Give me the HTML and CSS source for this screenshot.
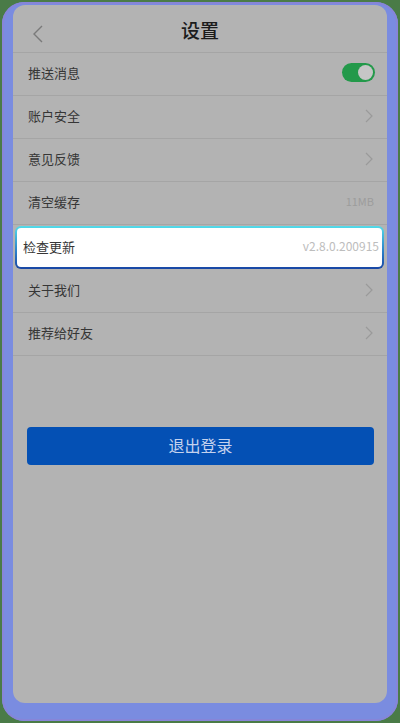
FILE: index.html
```html
<!DOCTYPE html>
<html lang="zh">
<head>
<meta charset="utf-8">
<link rel="stylesheet" href="styles.css">
</head>
<body>
<div class="frame">
  <div class="screen">
    <header class="header">
      <svg class="back" width="12" height="18" viewBox="0 0 12 18"><path d="M10 1 L2 9 L10 17" fill="none" stroke="#7a7a7a" stroke-width="1.4"/></svg>
      <h1 class="title">设置</h1>
    </header>
    <div class="row">
      <span class="label">推送消息</span>
      <span class="toggle"><span class="knob"></span></span>
    </div>
    <div class="row">
      <span class="label">账户安全</span>
      <svg class="chev" width="8" height="14" viewBox="0 0 8 14"><path d="M1 1 L7 7 L1 13" fill="none" stroke="#9a9a9a" stroke-width="1.2"/></svg>
    </div>
    <div class="row">
      <span class="label">意见反馈</span>
      <svg class="chev" width="8" height="14" viewBox="0 0 8 14"><path d="M1 1 L7 7 L1 13" fill="none" stroke="#9a9a9a" stroke-width="1.2"/></svg>
    </div>
    <div class="row">
      <span class="label">清空缓存</span>
      <span class="value">11MB</span>
    </div>
    <div class="card">
      <span class="label">检查更新</span>
      <span class="version">v2.8.0.200915</span>
    </div>
    <div class="row">
      <span class="label">关于我们</span>
      <svg class="chev" width="8" height="14" viewBox="0 0 8 14"><path d="M1 1 L7 7 L1 13" fill="none" stroke="#9a9a9a" stroke-width="1.2"/></svg>
    </div>
    <div class="row">
      <span class="label">推荐给好友</span>
      <svg class="chev" width="8" height="14" viewBox="0 0 8 14"><path d="M1 1 L7 7 L1 13" fill="none" stroke="#9a9a9a" stroke-width="1.2"/></svg>
    </div>
    <button class="logout">退出登录</button>
  </div>
</div>
</body>
</html>
```
FILE: styles.css
```css
* { box-sizing: border-box; }
html, body { margin: 0; padding: 0; }
body {
  width: 400px;
  height: 723px;
  background: #4a7b47;
  font-family: "Noto Sans CJK SC", "Noto Sans", sans-serif;
  padding: 2px;
}
.frame {
  height: 719px;
  background: #7a8ce0;
  border-radius: 22px;
  box-shadow: inset 0 0 0 2px #8785d8;
  padding: 3px 11px 18px 11px;
}
.screen {
  height: 100%;
  background: #b3b3b3;
  border-radius: 12px;
  display: flex;
  flex-direction: column;
}
.header {
  height: 48px;
  border-bottom: 1px solid #a5a5a5;
  display: flex;
  align-items: center;
  justify-content: center;
  position: relative;
}
.back {
  position: absolute;
  left: 19px;
  top: 20px;
}
.title {
  margin: 0;
  font-size: 19px;
  font-weight: 500;
  color: #1c1c1c;
  line-height: 1;
  padding-top: 1px;
}
.row {
  height: 43px;
  border-bottom: 1px solid #a5a5a5;
  display: flex;
  align-items: center;
  justify-content: space-between;
  padding: 0 13px 3px 15px;
}
.label {
  font-size: 13px;
  color: #363636;
  line-height: 1;
}
.chev { margin-right: 1px; }
.value {
  font-size: 11px;
  color: #9c9c9c;
  line-height: 1;
}
.toggle {
  width: 33px;
  height: 19px;
  border-radius: 10px;
  background: #23994a;
  display: flex;
  align-items: center;
  justify-content: flex-end;
  padding: 0 2px;
  margin-right: -1px;
}
.knob {
  width: 15px;
  height: 15px;
  border-radius: 50%;
  background: #c6c6c6;
}
.card {
  height: 43px;
  margin: 1px 3px 1px 2px;
  border: 2px solid transparent;
  border-radius: 6px;
  background: linear-gradient(#ffffff, #ffffff) padding-box,
              linear-gradient(#52dbe9, #2a7ec8 60%, #1846a4) border-box;
  display: flex;
  align-items: center;
  justify-content: space-between;
  padding: 0 3px 3px 6px;
}
.version {
  font-size: 12px;
  color: #bdbdbd;
  line-height: 1;
}
.logout {
  margin: 71px 13px 0 14px;
  height: 38px;
  border: none;
  border-radius: 4px;
  background: #0450b4;
  color: #c4d2ee;
  font-family: "Noto Sans CJK SC", "Noto Sans", sans-serif;
  font-size: 16px;
  padding: 0 0 3px 0;
}
```
